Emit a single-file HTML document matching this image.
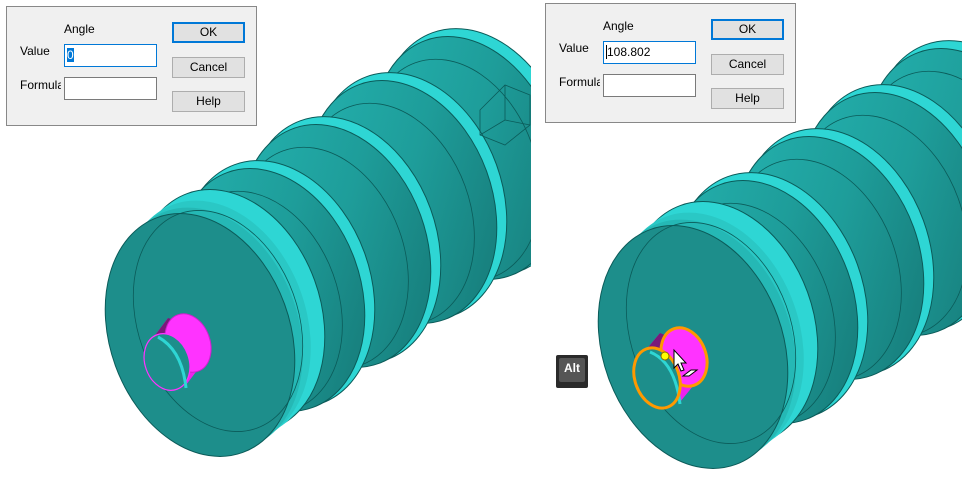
<!DOCTYPE html>
<html><head><meta charset="utf-8"><style>
body{margin:0;width:962px;height:479px;background:#fff;overflow:hidden;position:relative;font-family:"Liberation Sans",sans-serif;font-size:12px;color:#000}
.dlg{position:absolute;width:249px;height:118px;background:#f0f0f0;border:1px solid #888;}
.dlg div{position:absolute}
.lbl{font-size:12px}
.inp{background:#fff;border:1px solid #7a7a7a;width:91px;height:21px}
.btn{background:#e1e1e1;border:1px solid #adadad;width:71px;height:19px;text-align:center;line-height:19px}
svg{position:absolute;left:0;top:0}
</style></head><body>
<svg width="962" height="479" viewBox="0 0 962 479">
<defs>
<clipPath id="cl"><rect x="0" y="0" width="531" height="479"/></clipPath>
<clipPath id="cr"><rect x="540" y="0" width="422" height="479"/></clipPath>
<linearGradient id="cone" x1="0" y1="0" x2="1" y2="1">
<stop offset="0" stop-color="#24b3b0"/><stop offset="0.5" stop-color="#1e9d9a"/><stop offset="1" stop-color="#157573"/></linearGradient>
<g id="disk">
<ellipse cx="30" cy="-24" rx="90" ry="125" transform="rotate(-20 30 -24)" fill="#2ed6d4" stroke="#0b5b59"/>
<ellipse cx="24" cy="-19" rx="90" ry="125" transform="rotate(-20 24 -19)" fill="#2ed6d4"/>
<ellipse cx="16" cy="-13" rx="90" ry="125" transform="rotate(-20 16 -13)" fill="#2ac8c5"/>
<ellipse cx="8" cy="-6" rx="90" ry="125" transform="rotate(-20 8 -6)" fill="#25b8b5"/>
<ellipse cx="0" cy="0" rx="90" ry="125" transform="rotate(-20)" fill="#1d8e8b" stroke="#0b5b59"/>
<ellipse cx="18" cy="-14" rx="80" ry="114" transform="rotate(-20 18 -14)" fill="none" stroke="#0b5b59" stroke-width="0.8"/>
</g>
<g id="back">
<ellipse cx="8" cy="-6" rx="92" ry="127" transform="rotate(-20 8 -6)" fill="#2ed6d4" stroke="#0b5b59"/>
<ellipse cx="0" cy="0" rx="90" ry="125" transform="rotate(-20)" fill="url(#cone)" stroke="#0b5b59"/>
<ellipse cx="-14" cy="12" rx="82" ry="114" transform="rotate(-20 -14 12)" fill="none" stroke="#0b5b59" stroke-width="0.8"/>
<ellipse cx="-30" cy="30" rx="40" ry="56" transform="rotate(-20 -30 30)" fill="none" stroke="#0b5b59" stroke-width="0.8"/>
</g>
<g id="shaft">
<use href="#back" transform="translate(268,158)"/>
<use href="#back" transform="translate(202,202)"/>
<use href="#back" transform="translate(136,246)"/>
<use href="#back" transform="translate(70,290)"/>
<use href="#disk" transform="translate(0,335)"/>
</g>
</defs>
<g clip-path="url(#cl)">
<use href="#shaft" transform="translate(200,0)"/>
<path d="M150 342 L168 318 L205 360 L186 385 Z" fill="#ee22ee"/>
<path d="M150 342 L168 318 L180 322 L160 345 Z" fill="#7a1a7a"/>
<ellipse cx="188" cy="343" rx="22" ry="30" transform="rotate(-20 188 343)" fill="#ff33ff" stroke="#cc22cc"/>
<ellipse cx="167" cy="362" rx="22" ry="29" transform="rotate(-20 167 362)" fill="#1d8e8b" stroke="#ff33ff" stroke-width="1.2"/>
<path d="M158 337 Q182 350 186 388" fill="none" stroke="#2ed6d4" stroke-width="3"/>
<g transform="translate(480,100)" fill="none" stroke="#0b5b59" stroke-width="0.8"><path d="M0 10 L25 -15 L50 -5 L50 25 L25 45 L0 35 Z M25 -15 L25 20 L0 35 M25 20 L50 25"/></g>
</g>
<g clip-path="url(#cr)">
<use href="#shaft" transform="translate(693,12)"/>
<path d="M640 357 L660 333 L702 375 L680 402 Z" fill="#ee22ee"/>
<path d="M640 357 L660 333 L672 338 L652 360 Z" fill="#7a1a7a"/>
<ellipse cx="684" cy="357" rx="22" ry="30" transform="rotate(-20 684 357)" fill="#ff33ff" stroke="#ff9900" stroke-width="3"/>
<ellipse cx="657" cy="378" rx="22" ry="31" transform="rotate(-20 657 378)" fill="#1d8e8b"/>
<path d="M650 352 Q675 362 680 404" fill="none" stroke="#2ed6d4" stroke-width="3"/>
<ellipse cx="657" cy="378" rx="22" ry="31" transform="rotate(-20 657 378)" fill="none" stroke="#ff9900" stroke-width="3"/>
<circle cx="665" cy="356" r="4" fill="#ffff00" stroke="#886600"/>
<path d="M674 350 L674 368 L678 364 L681 371 L684 370 L681 363 L686 363 Z" fill="#fff" stroke="#000" stroke-width="1"/>
<path d="M683 376 L691 370 L697 370 L689 376 Z" fill="#fff" stroke="#000" stroke-width="1"/>
</g>
<rect x="556" y="355" width="32" height="33" rx="2" fill="#2a2a2a"/>
<rect x="559" y="358" width="26" height="24" rx="2" fill="#555"/>
<text x="572" y="372" font-family="Liberation Sans" font-weight="bold" font-size="12" fill="#fff" text-anchor="middle">Alt</text>
</svg>
<div class="dlg" style="left:6px;top:6px">
<div class="lbl" style="left:57px;top:15px">Angle</div>
<div class="lbl" style="left:13px;top:37px">Value</div>
<div class="inp" style="left:57px;top:37px;border-color:#0078d7"><span style="position:absolute;left:2px;top:3px;background:#0078d7;color:#fff;line-height:14px">0</span></div>
<div class="lbl" style="left:13px;top:71px;width:41px;overflow:hidden">Formula</div>
<div class="inp" style="left:57px;top:70px"></div>
<div class="btn" style="left:165px;top:15px;border:2px solid #0078d7;width:69px;height:17px;line-height:17px">OK</div>
<div class="btn" style="left:165px;top:50px">Cancel</div>
<div class="btn" style="left:165px;top:84px">Help</div>
</div>
<div class="dlg" style="left:545px;top:3px">
<div class="lbl" style="left:57px;top:15px">Angle</div>
<div class="lbl" style="left:13px;top:37px">Value</div>
<div class="inp" style="left:57px;top:37px;border-color:#0078d7"><span style="position:absolute;left:2px;top:3px;line-height:14px;border-left:1px solid #000">108.802</span></div>
<div class="lbl" style="left:13px;top:71px;width:41px;overflow:hidden">Formula</div>
<div class="inp" style="left:57px;top:70px"></div>
<div class="btn" style="left:165px;top:15px;border:2px solid #0078d7;width:69px;height:17px;line-height:17px">OK</div>
<div class="btn" style="left:165px;top:50px">Cancel</div>
<div class="btn" style="left:165px;top:84px">Help</div>
</div>
</body></html>
